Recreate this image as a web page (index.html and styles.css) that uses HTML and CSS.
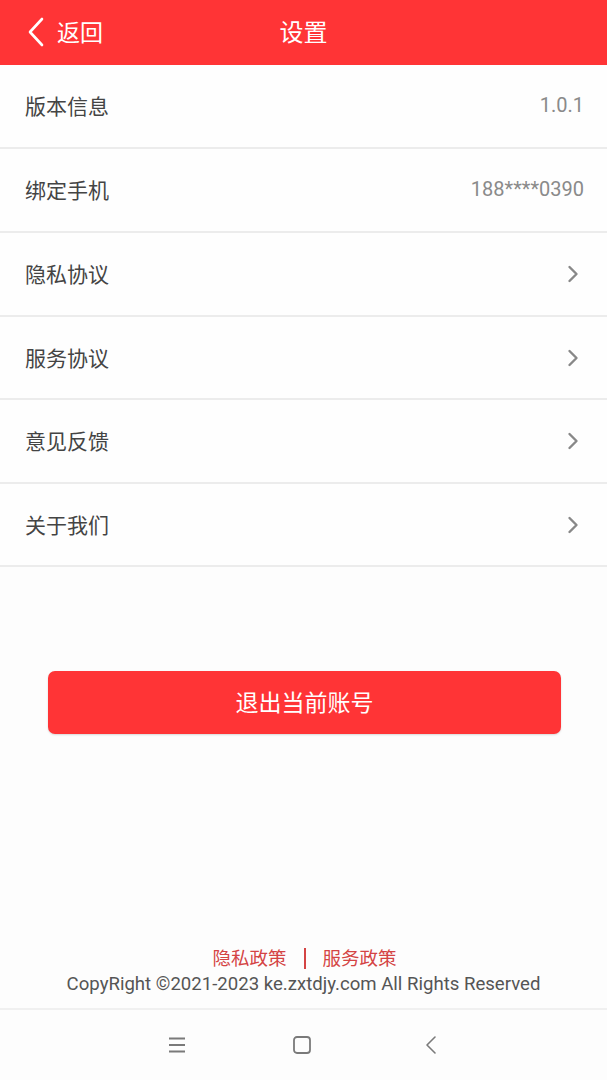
FILE: index.html
```html
<!DOCTYPE html>
<html lang="zh">
<head>
<meta charset="utf-8">
<link rel="stylesheet" href="styles.css">
</head>
<body>
<div class="page">
  <header class="topbar">
    <div class="back">
      <svg class="back-icon" width="18" height="30" viewBox="0 0 18 30"><path d="M15 2 L3 15 L15 28" fill="none" stroke="#fff" stroke-width="2.6" stroke-linecap="round" stroke-linejoin="round"/></svg>
      <span>返回</span>
    </div>
    <div class="title">设置</div>
  </header>
  <ul class="list">
    <li class="row"><span class="label">版本信息</span><span class="value">1.0.1</span></li>
    <li class="row"><span class="label">绑定手机</span><span class="value">188****0390</span></li>
    <li class="row"><span class="label">隐私协议</span><svg class="chev" width="12" height="18" viewBox="0 0 12 18"><path d="M2.5 2 L9.5 9 L2.5 16" fill="none" stroke="#888" stroke-width="2.4" stroke-linecap="round" stroke-linejoin="round"/></svg></li>
    <li class="row r83"><span class="label">服务协议</span><svg class="chev" width="12" height="18" viewBox="0 0 12 18"><path d="M2.5 2 L9.5 9 L2.5 16" fill="none" stroke="#888" stroke-width="2.4" stroke-linecap="round" stroke-linejoin="round"/></svg></li>
    <li class="row"><span class="label">意见反馈</span><svg class="chev" width="12" height="18" viewBox="0 0 12 18"><path d="M2.5 2 L9.5 9 L2.5 16" fill="none" stroke="#888" stroke-width="2.4" stroke-linecap="round" stroke-linejoin="round"/></svg></li>
    <li class="row r83"><span class="label">关于我们</span><svg class="chev" width="12" height="18" viewBox="0 0 12 18"><path d="M2.5 2 L9.5 9 L2.5 16" fill="none" stroke="#888" stroke-width="2.4" stroke-linecap="round" stroke-linejoin="round"/></svg></li>
  </ul>
  <div class="logout-wrap">
    <button class="logout">退出当前账号</button>
  </div>
  <footer class="footer">
    <div class="links"><span>隐私政策</span><span class="sep"></span><span>服务政策</span></div>
    <div class="copy">CopyRight ©2021-2023 ke.zxtdjy.com All Rights Reserved</div>
  </footer>
  <nav class="sysnav">
    <svg class="nav-menu" width="18" height="16" viewBox="0 0 18 16"><path d="M1 1.5H17M1 8H17M1 14.5H17" stroke="#7a7a7a" stroke-width="1.8"/></svg>
    <svg class="nav-home" width="18" height="18" viewBox="0 0 18 18"><rect x="1" y="1" width="16" height="16" rx="3" fill="none" stroke="#7a7a7a" stroke-width="1.8"/></svg>
    <svg class="nav-back" width="12" height="20" viewBox="0 0 12 20"><path d="M10 2 L2 10 L10 18" fill="none" stroke="#7a7a7a" stroke-width="1.6" stroke-linecap="round" stroke-linejoin="round"/></svg>
  </nav>
</div>
</body>
</html>
```
FILE: styles.css
```css
* { box-sizing: border-box; }
html, body { margin: 0; padding: 0; }
body {
  width: 607px;
  height: 1080px;
  background: #fdfdfd;
  font-family: Roboto, "Noto Sans CJK SC", "Noto Sans", sans-serif;
  overflow: hidden;
}
.page {
  display: flex;
  flex-direction: column;
  height: 1080px;
}
.topbar {
  height: 65px;
  background: #ff3436;
  display: flex;
  align-items: center;
  justify-content: center;
  position: relative;
  color: #fff;
  flex-shrink: 0;
}
.back {
  position: absolute;
  left: 27px;
  top: 16px;
  display: flex;
  align-items: center;
  gap: 12px;
  font-size: 23px;
  font-family: "Noto Sans CJK SC", sans-serif;
}
.back span { margin-top: -2px; }
.back-icon { display: block; }
.title {
  font-size: 24px;
  font-family: "Noto Sans CJK SC", sans-serif;
  margin-top: -4px;
}
.list {
  list-style: none;
  margin: 0;
  padding: 0;
}
.row {
  height: 84px;
  display: flex;
  align-items: center;
  justify-content: space-between;
  padding: 0 23px 0 25px;
  border-bottom: 2px solid #ececec;
  background: #fefefe;
}
.row.r83 { height: 83px; }
.label {
  font-family: "Noto Sans CJK SC", sans-serif;
  font-size: 21px;
  color: #444;
  margin-top: -2px;
}
.value {
  font-family: Roboto, sans-serif;
  font-size: 20px;
  color: #8a8a8a;
  margin-top: -2px;
}
.chev { margin-right: 5px; }
.logout-wrap {
  padding: 104px 46px 0 48px;
}
.logout {
  width: 100%;
  height: 63px;
  border: none;
  border-radius: 7px;
  background: #ff3436;
  color: #fff;
  font-family: "Noto Sans CJK SC", sans-serif;
  font-size: 23px;
  padding: 0 0 4px;
  box-shadow: 0 1px 2px rgba(0,0,0,0.15);
}
.footer {
  margin-top: auto;
  text-align: center;
  padding-bottom: 11px;
  border-bottom: 2px solid #f0f0f0;
}
.links {
  font-family: "Noto Sans CJK SC", sans-serif;
  font-size: 18.5px;
  color: #d44444;
  display: flex;
  justify-content: center;
  align-items: center;
  gap: 17px;
  line-height: 26px;
  padding-left: 2px;
  margin-bottom: 1px;
}
.links .sep {
  display: block;
  width: 2px;
  height: 21px;
  background: #d44444;
  margin-top: 2px;
}
.copy {
  font-family: Roboto, sans-serif;
  font-size: 18.6px;
  color: #555;
  line-height: 26px;
}
.sysnav {
  height: 70px;
  flex-shrink: 0;
  display: flex;
  align-items: center;
  padding-left: 168px;
  background: #fdfdfd;
}
.nav-home { margin-left: 107px; }
.nav-back { margin-left: 114px; }
```
